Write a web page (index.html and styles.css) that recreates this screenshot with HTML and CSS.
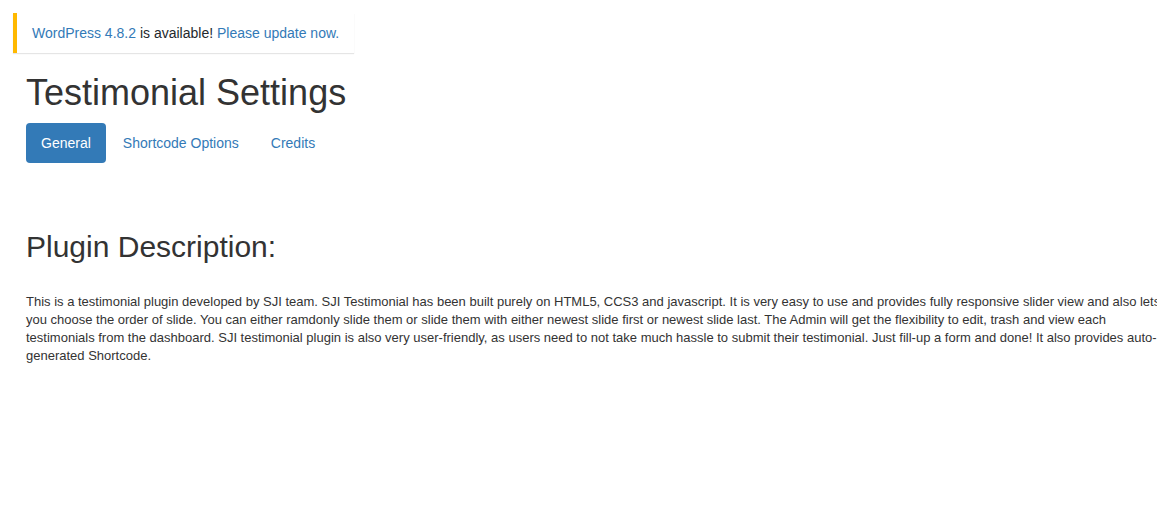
FILE: index.html
```html
<!DOCTYPE html>
<html lang="en">
<head>
<meta charset="utf-8">
<title>Testimonial Settings</title>
<link rel="stylesheet" href="styles.css">
</head>
<body>
<div class="page">
  <div class="update-nag">
    <a href="#">WordPress 4.8.2</a> is available! <a href="#">Please update now.</a>
  </div>
  <div class="wrap">
    <h1 class="title">Testimonial Settings</h1>
    <ul class="nav-pills">
      <li class="active"><a href="#">General</a></li>
      <li><a href="#">Shortcode Options</a></li>
      <li><a href="#">Credits</a></li>
    </ul>
    <h2 class="section-title">Plugin Description:</h2>
    <p class="desc">This is a testimonial plugin developed by SJI team. SJI Testimonial has been built purely on HTML5, CCS3 and javascript. It is very easy to use and provides fully responsive slider view and also lets you choose the order of slide. You can either ramdonly slide them or slide them with either newest slide first or newest slide last. The Admin will get the flexibility to edit, trash and view each testimonials from the dashboard. SJI testimonial plugin is also very user-friendly, as users need to not take much hassle to submit their testimonial. Just fill-up a form and done! It also provides auto-generated Shortcode.</p>
  </div>
</div>
</body>
</html>
```
FILE: styles.css
```css
html, body {
  margin: 0;
  padding: 0;
  background: #fff;
  overflow: hidden;
}
body {
  font-family: "Liberation Sans", Arial, Helvetica, sans-serif;
  color: #333;
  font-size: 13px;
  line-height: 1.4;
}
a {
  color: #337ab7;
  text-decoration: none;
}
.page {
  padding-top: 13px;
}
.update-nag {
  display: inline-block;
  margin-left: 13px;
  padding: 11px 15px;
  font-size: 14px;
  line-height: 18px;
  border-left: 4px solid #ffb900;
  box-shadow: 0 1px 1px 0 rgba(0, 0, 0, 0.1);
  background: #fff;
  color: #23282d;
}
.wrap {
  margin-left: 26px;
  width: 1145px;
}
.title {
  margin: 20px 0 10px;
  font-size: 36px;
  line-height: 1.1;
  font-weight: 500;
  color: #333;
}
.nav-pills {
  list-style: none;
  margin: 0;
  padding: 0;
  display: flex;
  gap: 2px;
}
.nav-pills a {
  display: block;
  padding: 10px 15px;
  font-size: 14px;
  line-height: 20px;
  border-radius: 4px;
  color: #337ab7;
}
.nav-pills .active a {
  background: #337ab7;
  color: #fff;
}
.section-title {
  margin: 67px 0 0;
  font-size: 30px;
  line-height: 33px;
  font-weight: 500;
  color: #333;
}
.desc {
  margin: 30px 0 0;
  font-size: 13px;
  line-height: 18px;
  color: #333;
}
```
